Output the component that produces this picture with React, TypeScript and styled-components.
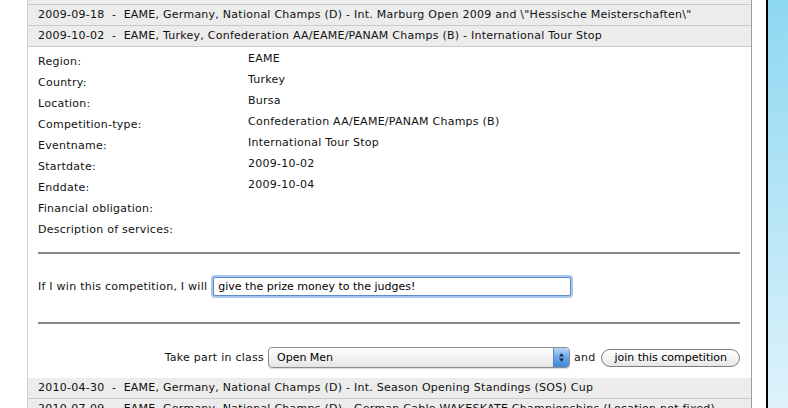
import React from "react";
import styled, { createGlobalStyle } from "styled-components";

const GlobalStyle = createGlobalStyle`
  html, body {
    margin: 0;
    padding: 0;
    background: #fff;
  }
  body {
    font-family: "DejaVu Sans", Verdana, sans-serif;
    font-size: 11px;
    letter-spacing: 0.25px;
    color: #111;
  }
`;

const Page = styled.div`
  display: flex;
  width: 788px;
  height: 408px;
  overflow: hidden;
  background: #fff;
`;

const Gutter = styled.div`
  width: 27px;
  flex-shrink: 0;
`;

const Panel = styled.div`
  width: 723px;
  flex-shrink: 0;
  border-left: 1px solid #cfcfcf;
  border-right: 1px solid #9d9d9d;
  margin-top: -16px;
`;

const Spacer = styled.div`
  width: 14px;
  flex-shrink: 0;
`;

const WindowEdge = styled.div`
  width: 2px;
  flex-shrink: 0;
  background: #000;
`;

const Sky = styled.div`
  flex: 1;
  background: linear-gradient(to bottom, #8ed8f1 0%, #b9e6f6 55%, #dff3fb 100%);
`;

const EventRow = styled.div`
  height: 20px;
  line-height: 20px;
  padding-left: 10px;
  background: #ececec;
  border-bottom: 1px solid #c9c9c9;
  white-space: pre;
  overflow: hidden;
`;

const Details = styled.div`
  display: grid;
  grid-template-columns: 210px 1fr;
  grid-auto-rows: 21px;
  padding: 4px 10px 0;
`;

const Label = styled.div`
  line-height: 21px;
`;

const Value = styled.div`
  line-height: 15px;
`;

const Rule = styled.hr`
  border: 0;
  height: 2px;
  background: #8a8a8a;
  margin: 0 11px 0 10px;
`;

const RuleGap = styled.div`
  height: 12px;
`;

const PledgeRow = styled.div`
  display: flex;
  align-items: center;
  padding: 23px 10px 26px;
`;

const PledgeText = styled.span`
  margin-right: 6px;
`;

const PledgeInput = styled.input`
  width: 348px;
  height: 17px;
  padding: 0 4px;
  border: 1px solid #5f8cc8;
  border-radius: 2px;
  box-shadow: 0 0 0 2px #a9c6ee;
  font: inherit;
  color: #000;
  outline: none;
  box-sizing: content-box;
`;

const JoinRow = styled.div`
  display: flex;
  align-items: center;
  justify-content: flex-end;
  gap: 4px;
  padding: 23px 11px 10px 10px;
`;

const SelectBox = styled.div`
  display: flex;
  align-items: stretch;
  width: 300px;
  height: 19px;
  border: 1px solid #8e8e8e;
  border-radius: 4px;
  overflow: hidden;
  background: linear-gradient(to bottom, #ffffff 0%, #f3f3f3 50%, #e4e4e4 100%);
  box-shadow: 0 1px 1px rgba(0, 0, 0, 0.15);
`;

const SelectField = styled.select`
  flex: 1;
  appearance: none;
  -webkit-appearance: none;
  border: 0;
  background: transparent;
  font: inherit;
  color: #000;
  padding: 0 8px;
  outline: none;
`;

const Stepper = styled.div`
  width: 15px;
  display: flex;
  align-items: center;
  justify-content: center;
  background: linear-gradient(to bottom, #b9d7f7 0%, #6aa7ea 50%, #3f86dc 100%);
  border-left: 1px solid #5b85b8;
`;

const PillButton = styled.button`
  height: 18px;
  padding: 0 12px;
  margin-left: 2px;
  border: 1px solid #7d7d7d;
  border-radius: 9px;
  background: linear-gradient(to bottom, #ffffff 0%, #f4f4f4 50%, #e6e6e6 100%);
  font: inherit;
  color: #000;
  line-height: 16px;
`;

const events = {
  before: [
    "",
    "2009-09-18  -  EAME, Germany, National Champs (D) - Int. Marburg Open 2009 and \\\"Hessische Meisterschaften\\\"",
    "2009-10-02  -  EAME, Turkey, Confederation AA/EAME/PANAM Champs (B) - International Tour Stop",
  ],
  after: [
    "2010-04-30  -  EAME, Germany, National Champs (D) - Int. Season Opening Standings (SOS) Cup",
    "2010-07-09  -  EAME, Germany, National Champs (D) - German Cable WAKESKATE Championships (Location not fixed)",
  ],
};

const details: [string, string][] = [
  ["Region:", "EAME"],
  ["Country:", "Turkey"],
  ["Location:", "Bursa"],
  ["Competition-type:", "Confederation AA/EAME/PANAM Champs (B)"],
  ["Eventname:", "International Tour Stop"],
  ["Startdate:", "2009-10-02"],
  ["Enddate:", "2009-10-04"],
  ["Financial obligation:", ""],
  ["Description of services:", ""],
];

const App = () => {
  return (
    <Page>
      <GlobalStyle />
      <Gutter />
      <Panel>
        {events.before.map((e, i) => (
          <EventRow key={i}>{e}</EventRow>
        ))}
        <Details>
          {details.map(([k, v]) => (
            <React.Fragment key={k}>
              <Label>{k}</Label>
              <Value>{v}</Value>
            </React.Fragment>
          ))}
        </Details>
        <RuleGap />
        <Rule />
        <PledgeRow>
          <PledgeText>If I win this competition, I will</PledgeText>
          <PledgeInput defaultValue="give the prize money to the judges!" />
        </PledgeRow>
        <Rule />
        <JoinRow>
          <span>Take part in class</span>
          <SelectBox>
            <SelectField defaultValue="Open Men">
              <option>Open Men</option>
              <option>Open Ladies</option>
              <option>Junior Men</option>
            </SelectField>
            <Stepper>
              <svg width="7" height="11" viewBox="0 0 7 11">
                <path d="M3.5 1 L6 4.5 L1 4.5 Z" fill="#1a2a44" />
                <path d="M3.5 10 L6 6.5 L1 6.5 Z" fill="#1a2a44" />
              </svg>
            </Stepper>
          </SelectBox>
          <span>and</span>
          <PillButton>join this competition</PillButton>
        </JoinRow>
        {events.after.map((e, i) => (
          <EventRow key={i}>{e}</EventRow>
        ))}
      </Panel>
      <Spacer />
      <WindowEdge />
      <Sky />
    </Page>
  );
};

export default App;
